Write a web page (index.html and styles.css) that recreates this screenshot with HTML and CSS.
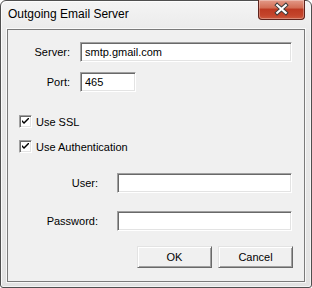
FILE: index.html
```
<!DOCTYPE html>
<html lang="en">
<head>
    <meta charset="UTF-8">
    <meta name="viewport" content="width=device-width, initial-scale=1.0">
    <title>Outgoing Email Server</title>
    <link rel="stylesheet" href="styles.css">
</head>
<body>
    <div class="window">
        <div class="titlebar">
            <span class="title">Outgoing Email Server</span>
            <button type="button" class="close-btn" aria-label="Close">
                <svg width="47" height="19" viewBox="0 0 47 19">
                    <path d="M19 5 L28 13 M28 5 L19 13" stroke="#3a3a3a" stroke-width="4.2" stroke-linecap="square" fill="none"/>
                    <path d="M19 5 L28 13 M28 5 L19 13" stroke="#ffffff" stroke-width="2.2" stroke-linecap="square" fill="none"/>
                </svg>
            </button>
        </div>
        <div class="client">
            <div class="row row-server">
                <label class="lbl lbl-short" for="server">Server:</label>
                <input type="text" id="server" class="field field-wide" value="smtp.gmail.com">
            </div>
            <div class="row row-port">
                <label class="lbl lbl-short" for="port">Port:</label>
                <input type="text" id="port" class="field field-port" value="465">
            </div>
            <div class="check-row check-ssl">
                <span class="checkbox">
                    <svg width="7" height="7" viewBox="0 0 7 7"><path d="M0 2 L0 4 L2 6 L7 1 L7 -1 L2 4 Z" fill="#000"/></svg>
                </span>
                <span class="check-text">Use SSL</span>
            </div>
            <div class="check-row check-auth">
                <span class="checkbox">
                    <svg width="7" height="7" viewBox="0 0 7 7"><path d="M0 2 L0 4 L2 6 L7 1 L7 -1 L2 4 Z" fill="#000"/></svg>
                </span>
                <span class="check-text">Use Authentication</span>
            </div>
            <div class="row row-user">
                <label class="lbl lbl-long" for="user">User:</label>
                <input type="text" id="user" class="field field-mid">
            </div>
            <div class="row row-pass">
                <label class="lbl lbl-long" for="password">Password:</label>
                <input type="password" id="password" class="field field-mid">
            </div>
            <div class="buttons">
                <button type="button" class="btn">OK</button>
                <button type="button" class="btn">Cancel</button>
            </div>
        </div>
    </div>
</body>
</html>
```

FILE: styles.css
```
* {
    box-sizing: border-box;
}
body {
    margin: 0;
    font-family: "Liberation Sans", Arial, sans-serif;
    font-size: 11px;
    color: #000;
    background: #fff;
}
.window {
    width: 312px;
    height: 288px;
    border: 1px solid #4f4f4f;
    border-radius: 6px 6px 3px 3px;
    background: linear-gradient(180deg, #f4f4f4 0%, #e9e9e9 12%, #e6e6e6 60%, #e2e2e2 100%);
    padding: 0 6px 5px;
    display: flex;
    flex-direction: column;
    box-shadow: inset 1px 1px 0 rgba(255, 255, 255, 0.8), inset -1px -1px 0 rgba(255, 255, 255, 0.6);
}
.titlebar {
    height: 28px;
    display: flex;
    align-items: flex-start;
}
.title {
    margin-top: 6px;
    padding-left: 1px;
    font-size: 12px;
    line-height: 14px;
    color: #000;
    text-shadow: 0 0 6px #fff;
}
.close-btn {
    margin-left: auto;
    margin-top: -1px;
    width: 47px;
    height: 20px;
    padding: 0;
    border: 1px solid #5e231c;
    border-top: none;
    border-radius: 0 0 4px 4px;
    background: linear-gradient(180deg, #e39a88 0%, #d36e55 40%, #bd3a22 50%, #c4442b 80%, #d8715330 100%), #c9553a;
    box-shadow: inset 0 0 0 1px rgba(255, 255, 255, 0.3);
    display: flex;
}
.client {
    flex: 1;
    background: #f0f0f0;
    border: 1px solid #7a7a7a;
    box-shadow: 0 0 0 1px rgba(255, 255, 255, 0.7);
}
.row {
    display: flex;
    align-items: center;
    height: 20px;
}
.row-server {
    margin-top: 12px;
}
.row-port {
    margin-top: 10px;
}
.row-user {
    margin-top: 20px;
}
.row-pass {
    margin-top: 18px;
}
.lbl {
    text-align: right;
}
.lbl-short {
    width: 62px;
    margin-right: 10px;
}
.lbl-long {
    width: 90px;
    margin-right: 19px;
}
.field {
    height: 20px;
    padding: 0 0 0 4px;
    font-family: inherit;
    font-size: 11px;
    color: #000;
    background: #fff;
    border: 1px solid;
    border-color: #a0a0a0 #fff #fff #a0a0a0;
    box-shadow: inset 1px 1px 0 #696969, inset -1px -1px 0 #e3e3e3;
    outline: none;
}
.field-wide {
    width: 212px;
}
.field-port {
    width: 56px;
}
.field-mid {
    width: 175px;
}
.check-row {
    display: flex;
    align-items: center;
    height: 13px;
    padding-left: 11px;
}
.check-ssl {
    margin-top: 23px;
}
.check-auth {
    margin-top: 12px;
}
.checkbox {
    width: 13px;
    height: 13px;
    background: #fff;
    border: 1px solid;
    border-color: #a0a0a0 #fff #fff #a0a0a0;
    box-shadow: inset 1px 1px 0 #696969, inset -1px -1px 0 #e3e3e3;
    display: flex;
    align-items: center;
    justify-content: center;
}
.check-text {
    margin-left: 4px;
}
.buttons {
    display: flex;
    gap: 6px;
    margin-top: 15px;
    padding-left: 129px;
}
.btn {
    width: 75px;
    height: 22px;
    padding: 0;
    font-family: inherit;
    font-size: 11px;
    color: #000;
    background: #f0f0f0;
    border: 1px solid;
    border-color: #e3e3e3 #696969 #696969 #e3e3e3;
    box-shadow: inset 1px 1px 0 #fff, inset -1px -1px 0 #a0a0a0;
}
```
